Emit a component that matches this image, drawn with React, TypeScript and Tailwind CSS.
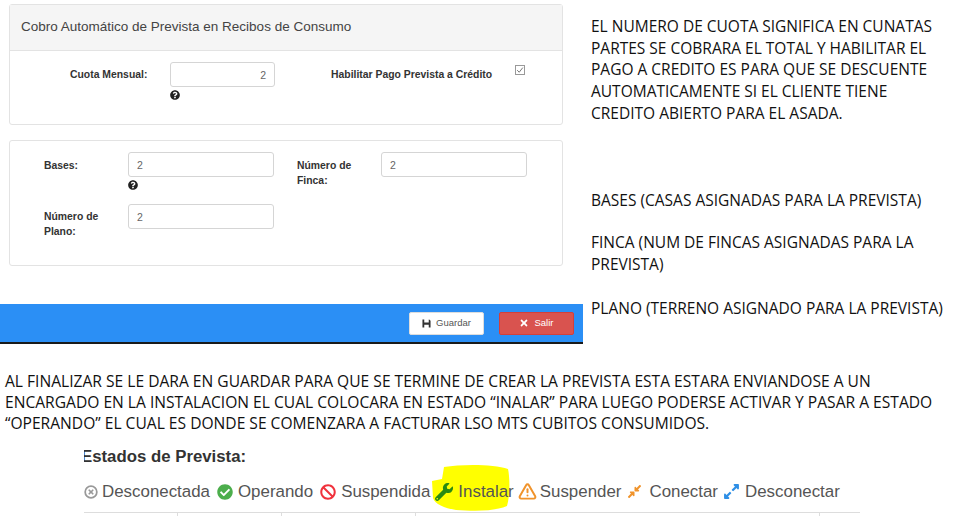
import { FaBan, FaCheckCircle, FaCompressAlt, FaExpandAlt, FaQuestionCircle, FaTimes, FaWrench } from "react-icons/fa";
import { TriangleAlert, CircleX } from "lucide-react";

const Field = ({ value, right = false, width = "w-[146px]" }: { value: string; right?: boolean; width?: string }) => (
  <div
    className={`${width} h-[25px] rounded-[3px] border border-[#d5d5d5] bg-white px-2 text-[10.5px] leading-[24px] text-[#666] ${right ? "text-right" : "pl-[8px]"}`}
  >
    {value}
  </div>
);

const Label = ({ children, className = "" }: { children: React.ReactNode; className?: string }) => (
  <div className={`text-[10.4px] leading-[15px] font-bold text-[#333] ${className}`}>{children}</div>
);

const Help = () => <FaQuestionCircle className="mt-[3px] h-[10px] w-[10px] text-[#222]" />;

function Forms() {
  return (
    <div className="w-[583px] shrink-0">
      <div className="ml-[9px] mt-[4px] h-[121px] w-[554px] rounded-[3px] border border-[#e3e3e3] bg-white">
        <div className="h-[46px] border-b border-[#e3e3e3] bg-[#f5f5f5] pl-[11px] pt-[12px] text-[13.5px] leading-[19px] text-[#444]">
          Cobro Automático de Prevista en Recibos de Consumo
        </div>
        <div className="flex pt-[11px]">
          <Label className="ml-[60px] mt-[5px] w-[100px]">Cuota Mensual:</Label>
          <div>
            <Field value="2" right width="w-[105px]" />
            <Help />
          </div>
          <Label className="ml-[56px] mt-[5px] w-[184px]">Habilitar Pago Prevista a Crédito</Label>
          <div className="mt-[3px] flex h-[10px] w-[10px] items-center justify-center border border-[#999] bg-white">
            <svg viewBox="0 0 10 10" className="h-[8px] w-[8px]">
              <path d="M1.5 5.2 L4 7.8 L8.5 2" fill="none" stroke="#555" strokeWidth="1" />
            </svg>
          </div>
        </div>
      </div>

      <div className="ml-[9px] mt-[15px] h-[126px] w-[554px] rounded-[3px] border border-[#e3e3e3] bg-white pt-[11px]">
        <div className="flex">
          <Label className="ml-[34px] mt-[6px] w-[84px]">Bases:</Label>
          <div className="w-[169px]">
            <Field value="2" />
            <Help />
          </div>
          <Label className="mt-[6px] w-[84px]">
            Número de
            <br />
            Finca:
          </Label>
          <Field value="2" />
        </div>
        <div className="mt-[14px] flex">
          <Label className="ml-[34px] mt-[5px] w-[84px]">
            Número de
            <br />
            Plano:
          </Label>
          <Field value="2" />
        </div>
      </div>

      <div className="mt-[38px] flex h-[40px] items-center justify-end border-b-2 border-[#1a1a1a] bg-[#2b8ff5] pr-[9px]">
        <div className="mr-[15px] flex h-[23px] w-[75px] items-center justify-center gap-[5px] rounded-[2px] border border-[#ddd] bg-white text-[9.5px] text-[#555]">
          <svg viewBox="0 0 10 10" className="h-[9px] w-[9px]">
            <path d="M0.5 0.5 H2.5 V4 H7.5 V0.5 H8 L9.5 2 V9.5 H0.5 Z M2.5 6.5 V9.5 H7.5 V6.5 Z" fill="#333" fillRule="evenodd" />
          </svg>
          Guardar
        </div>
        <div className="flex h-[23px] w-[75px] items-center justify-center gap-[5px] rounded-[2px] border border-[#d43f3a] bg-[#d9534f] text-[9.5px] text-white">
          <FaTimes className="h-[10px] w-[10px]" />
          Salir
        </div>
      </div>
    </div>
  );
}

function Notes() {
  return (
    <div className="ml-[8px] pt-[16px] font-['Open_Sans',sans-serif] text-[15.5px] leading-[21.7px] whitespace-nowrap text-[#111]">
      <p>
        EL NUMERO DE CUOTA SIGNIFICA EN CUNATAS
        <br />
        PARTES SE COBRARA EL TOTAL Y HABILITAR EL
        <br />
        PAGO A CREDITO ES PARA QUE SE DESCUENTE
        <br />
        AUTOMATICAMENTE SI EL CLIENTE TIENE
        <br />
        CREDITO ABIERTO PARA EL ASADA.
      </p>
      <p className="mt-[65px]">BASES (CASAS ASIGNADAS PARA LA PREVISTA)</p>
      <p className="mt-[21px]">
        FINCA (NUM DE FINCAS ASIGNADAS PARA LA
        <br />
        PREVISTA)
      </p>
      <p className="mt-[22px]">PLANO (TERRENO ASIGNADO PARA LA PREVISTA)</p>
    </div>
  );
}

function Estados() {
  return (
    <div className="relative ml-[84px] mt-[12px] w-[776px] font-['Liberation_Sans',sans-serif]">
      <svg viewBox="0 0 78 48" className="absolute left-[348px] top-[18px] h-[48px] w-[78px]">
        <path
          d="M12 3 C30 0 62 0 76 5 C78 14 78 32 75 42 C60 48 40 47 24 46 C12 44 3 40 1 34 L0 17 L10 15 Z"
          fill="#ffff00"
        />
      </svg>
      <div className="relative h-[21px] overflow-hidden text-[16.8px] leading-[21px] font-bold text-[#333]">
        <span className="ml-[-3px]">Estados de Prevista:</span>
      </div>
      <div className="relative mt-[14px] flex h-[21px] items-center whitespace-nowrap text-[16.9px] text-[#555]">
        <CircleX className="h-[14px] w-[14px] text-[#999]" strokeWidth={3} />
        <span className="ml-[4px]">Desconectada</span>
        <FaCheckCircle className="ml-[7px] h-[16px] w-[16px] text-[#4cae4c]" />
        <span className="ml-[5px]">Operando</span>
        <FaBan className="ml-[7px] h-[16px] w-[16px] text-[#f0323c]" />
        <span className="ml-[5px]">Suspendida</span>
        <FaWrench className="ml-[5px] h-[18px] w-[18px] text-[#2a8a12]" />
        <span className="ml-[5px]">Instalar</span>
        <TriangleAlert className="ml-[4px] h-[19px] w-[19px] text-[#f0932b]" strokeWidth={2.5} />
        <span className="ml-[3px]">Suspender</span>
        <FaCompressAlt className="ml-[6px] h-[15px] w-[15px] text-[#f0932b]" />
        <span className="ml-[7px]">Conectar</span>
        <FaExpandAlt className="ml-[5px] h-[17px] w-[17px] text-[#2e8fe6]" />
        <span className="ml-[5px]">Desconectar</span>
      </div>
      <div className="relative mt-[10px] h-[4px] border-t border-[#ddd]">
        <div className="absolute left-[93px] top-0 h-[3px] w-px bg-[#ddd]" />
        <div className="absolute left-[197px] top-0 h-[3px] w-px bg-[#ddd]" />
        <div className="absolute left-[331px] top-0 h-[3px] w-px bg-[#ddd]" />
        <div className="absolute left-[735px] top-0 h-[3px] w-px bg-[#ddd]" />
      </div>
    </div>
  );
}

export default function App() {
  return (
    <div className="h-[529px] w-[956px] overflow-hidden bg-white font-['Liberation_Sans',sans-serif]">
      <div className="flex h-[344px]">
        <Forms />
        <Notes />
      </div>
      <p className="ml-[5px] mt-[27px] font-['Open_Sans',sans-serif] text-[15.6px] leading-[21px] whitespace-nowrap text-[#111]">
        AL FINALIZAR SE LE DARA EN GUARDAR PARA QUE SE TERMINE DE CREAR LA PREVISTA ESTA ESTARA ENVIANDOSE A UN
        <br />
        ENCARGADO EN LA INSTALACION EL CUAL COLOCARA EN ESTADO “INALAR” PARA LUEGO PODERSE ACTIVAR Y PASAR A ESTADO
        <br />
        “OPERANDO” EL CUAL ES DONDE SE COMENZARA A FACTURAR LSO MTS CUBITOS CONSUMIDOS.
      </p>
      <Estados />
    </div>
  );
}
